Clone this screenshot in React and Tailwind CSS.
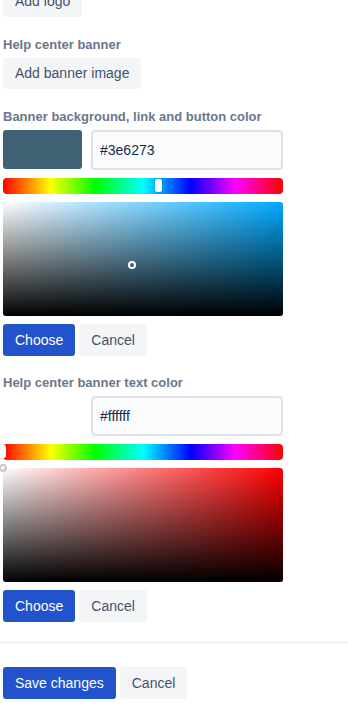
import React from 'react';

const HUE = 'bg-[linear-gradient(to_right,#ff0000_0%,#ffff00_17%,#00ff00_33%,#00ffff_50%,#0000ff_67%,#ff00ff_83%,#ff0000_100%)]';

const Label = ({ children, className = '' }) => (
  <div className={`text-[13px] leading-4 font-semibold text-[#6b778c] ${className}`}>{children}</div>
);

const GrayButton = ({ children, className = '' }) => (
  <button className={`block h-8 px-3 rounded-[3px] bg-[#f4f5f7] text-[14px] text-[#42526e] ${className}`}>{children}</button>
);

const BlueButton = ({ children }) => (
  <button className="block h-8 px-3 rounded-[3px] bg-[#2153cd] text-[14px] text-white">{children}</button>
);

const ColorPicker = ({ swatch, value, hueColor, huePos }) => (
  <div className="flex flex-col gap-2 w-[280px]">
    <div className="flex gap-[9px] h-10">
      <div className="shrink-0 w-[79px] h-[39px] rounded-[3px]" style={{ backgroundColor: swatch }} />
      <input
        readOnly
        value={value}
        className="min-w-0 flex-1 h-10 rounded-[4px] border-2 border-[#dfe1e6] bg-[#fafbfc] px-[7px] text-[14px] text-[#172b4d] outline-none"
      />
    </div>
    <div className={`relative h-4 rounded-[4px] ${HUE}`}>
      <div
        className="absolute top-[1px] w-[7px] h-[13px] rounded-[2px] bg-white shadow-[0_0_1px_rgba(0,0,0,0.5)]"
        style={{ left: huePos }}
      />
    </div>
    <div className="relative h-[114px] rounded-[3px] overflow-hidden" style={{ backgroundColor: hueColor }}>
      <div className="absolute inset-0 bg-[linear-gradient(to_right,#ffffff,rgba(255,255,255,0))]" />
      <div className="absolute inset-0 bg-[linear-gradient(to_top,#000000,rgba(0,0,0,0))]" />
    </div>
    <div className="flex gap-1">
      <BlueButton>Choose</BlueButton>
      <GrayButton>Cancel</GrayButton>
    </div>
  </div>
);

export default function App() {
  return (
    <div className="w-[348px] min-h-[715px] bg-white overflow-hidden font-['Liberation_Sans',Arial,sans-serif]">
      <div className="pl-[3px]">
        <GrayButton className="-mt-[14px] h-[31px]">Add logo</GrayButton>

        <Label className="mt-5">Help center banner</Label>
        <GrayButton className="mt-[5px] h-[31px]">Add banner image</GrayButton>

        <Label className="mt-5">Banner background, link and button color</Label>
        <div className="relative mt-[5px]">
          <ColorPicker swatch="#3e6273" value="#3e6273" hueColor="#00aaff" huePos="152px" />
          <div className="absolute left-[125px] top-[131px] w-2 h-2 rounded-full border-2 border-white" />
        </div>

        <Label className="mt-[19px]">Help center banner text color</Label>
        <div className="relative mt-[5px]">
          <ColorPicker swatch="#ffffff" value="#ffffff" hueColor="#ff0000" huePos="-4px" />
          <div className="absolute -left-[4px] top-[68px] w-[8px] h-[8px] rounded-full border-2 border-[#c9c9c9]" />
        </div>
      </div>

      <div className="mt-5 h-px bg-[#ebecf0]" />

      <div className="pl-[3px] mt-6 flex gap-1">
        <BlueButton>Save changes</BlueButton>
        <GrayButton>Cancel</GrayButton>
      </div>
    </div>
  );
}
